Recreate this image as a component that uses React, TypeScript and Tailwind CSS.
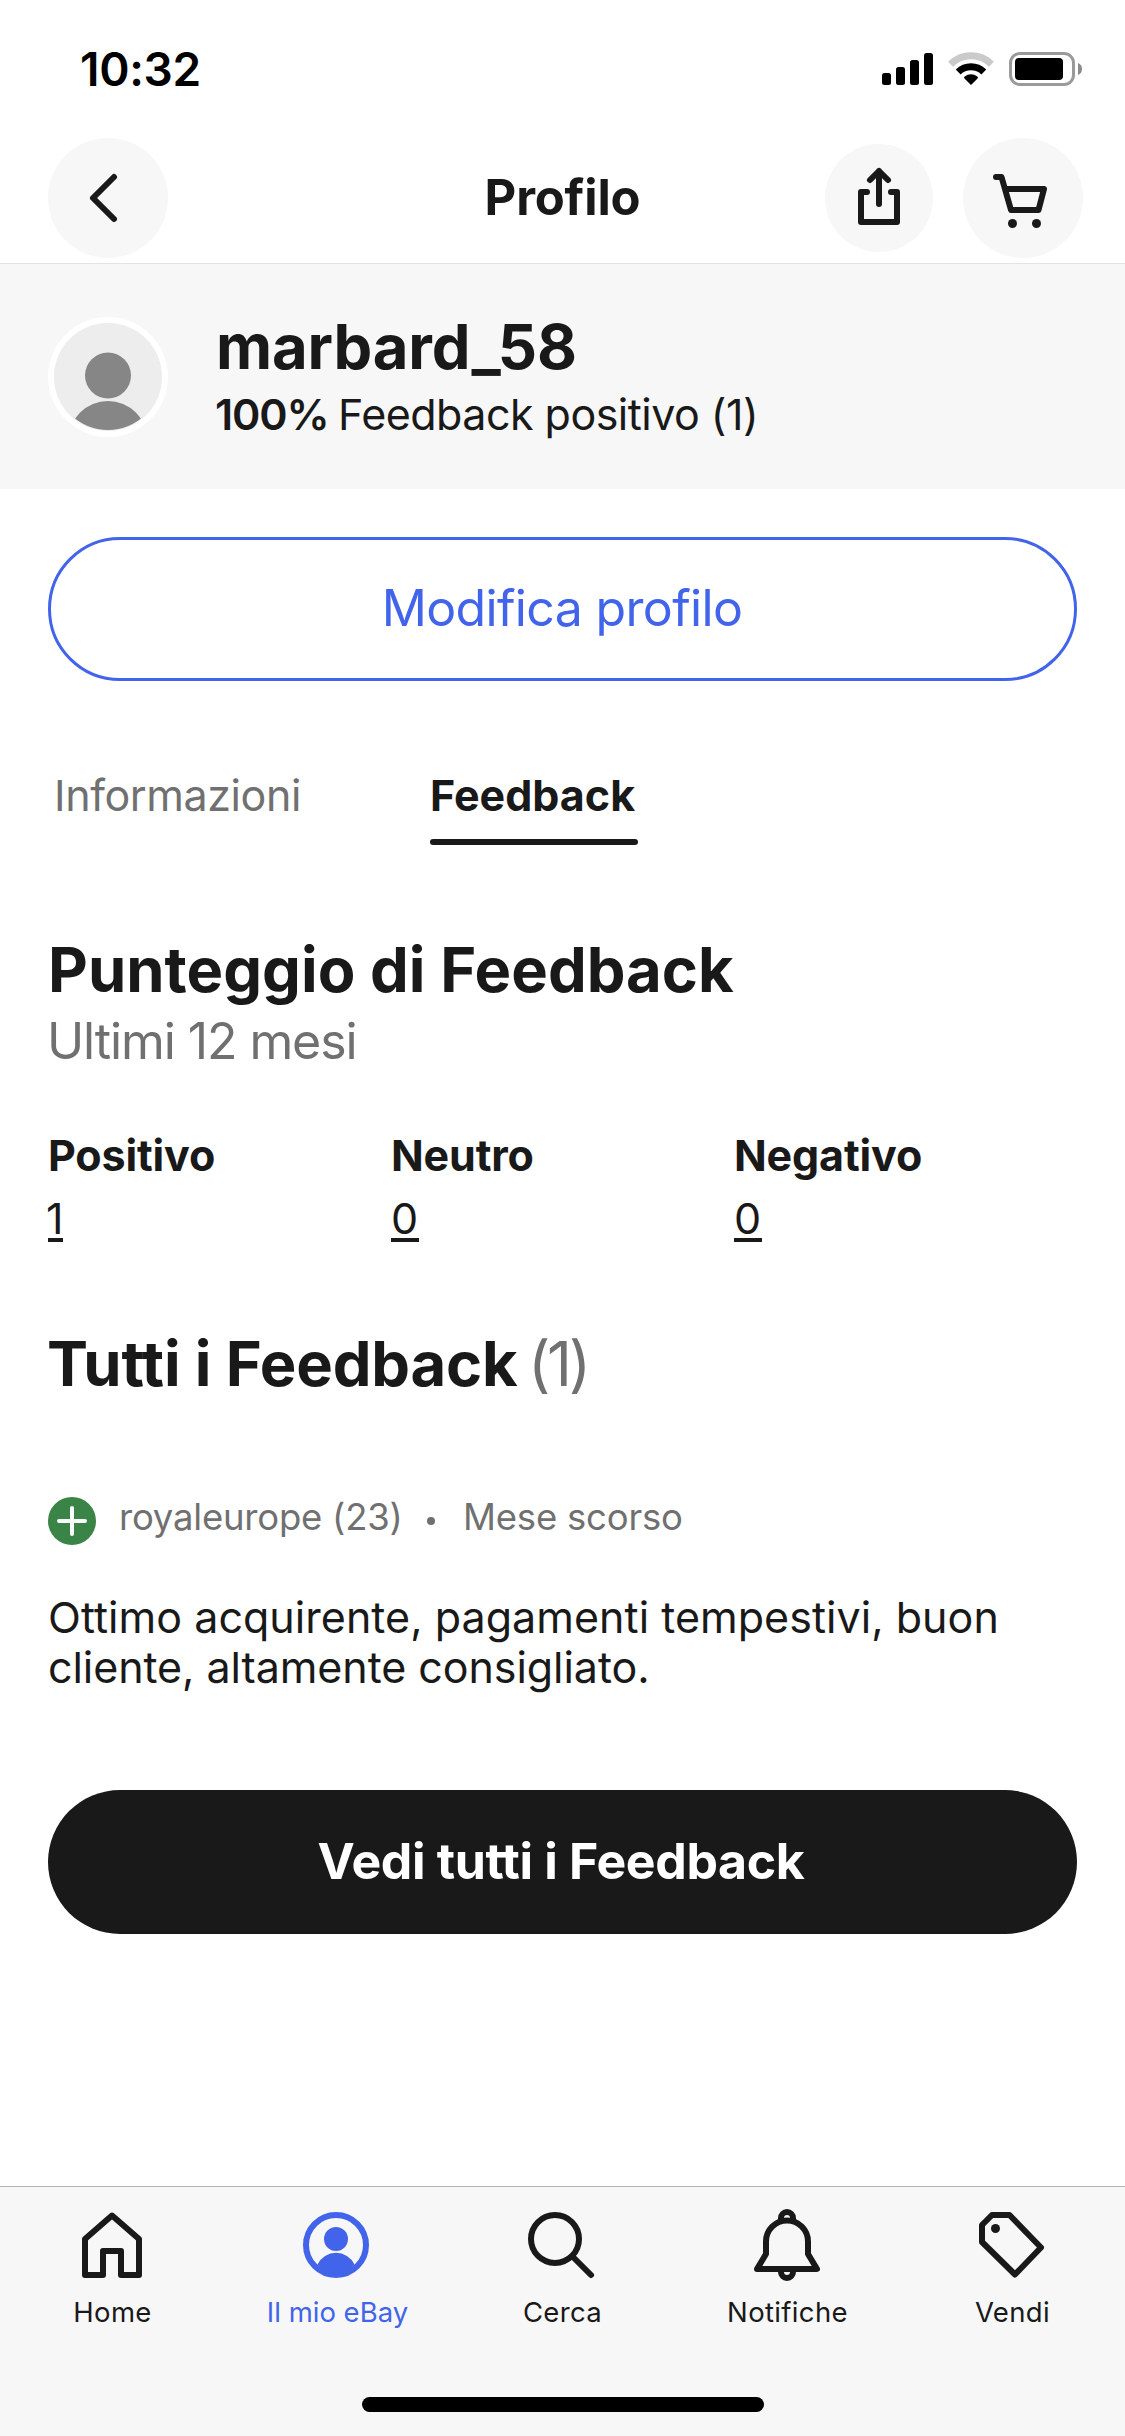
import React from 'react';

const iconStroke = {
  fill: 'none',
  stroke: 'currentColor',
  strokeWidth: 6,
  strokeLinecap: 'round' as const,
  strokeLinejoin: 'round' as const,
};

function StatusBar() {
  return (
    <div className="flex h-[132px] shrink-0 items-start justify-between pr-[41px] pl-[80px]">
      <span className="mt-[41px] text-[46px] leading-[56px] font-semibold tracking-[-0.3px] text-black">10:32</span>
      <div className="mt-[51px] flex items-start">
        <svg width="52" height="36" viewBox="0 0 52 36" className="mr-[13px]">
          <rect x="0" y="22" width="9" height="12" rx="2.500" />
          <rect x="14" y="16" width="9" height="18" rx="2.500" />
          <rect x="28" y="9" width="9" height="25" rx="2.500" />
          <rect x="42" y="2" width="9" height="32" rx="2.500" />
        </svg>
        <svg width="48" height="36" viewBox="0 0 48 36" className="mr-[14px]">
          <path d="M3.600 13.200a29 29 0 0 1 40.800 0" fill="none" stroke="#cacaca" strokeWidth="7" />
          <path d="M11.200 21a18.500 18.500 0 0 1 25.600 0" fill="none" stroke="#000" strokeWidth="7" />
          <path d="M24 34l-6.500-6.600c-.6-.6-.5-1.400.2-1.900a10.400 10.400 0 0 1 12.600 0c.7.5.8 1.300.2 1.900z" />
        </svg>
        <svg width="75" height="36" viewBox="0 0 75 36">
          <rect x="1.500" y="2.500" width="63" height="31" rx="9.500" fill="none" stroke="#9a9a9a" strokeWidth="3" />
          <rect x="6" y="7" width="48" height="22" rx="4" />
          <path d="M69 12c2.600 .9 4 3.200 4 6s-1.400 5.100-4 6z" fill="#8c8c8c" />
        </svg>
      </div>
    </div>
  );
}

function NavBar() {
  return (
    <header className="relative flex h-[132px] shrink-0 items-start justify-between border-b border-[#e3e3e3] pt-[6px] pr-[42px] pl-[48px]">
      <button className="size-[120px] rounded-full bg-[#f7f7f7]">
        <svg viewBox="0 0 120 120" className="size-[120px]" {...iconStroke}>
          <path d="M66 39L45 60l21 21" />
        </svg>
      </button>
      <h1 className="absolute inset-x-0 top-[36px] text-center text-[49px] leading-[59px] font-bold tracking-[-0.17px]">
        Profilo
      </h1>
      <div className="flex items-center gap-[30px]">
        <button className="size-[108px] rounded-full bg-[#f7f7f7]">
          <svg viewBox="0 0 108 108" className="size-[108px]" {...iconStroke}>
            <path d="M42 48h-6v30h36V48h-6" />
            <path d="M54 60V27M45 36l9-9 9 9" />
          </svg>
        </button>
        <button className="size-[120px] rounded-full bg-[#f7f7f7]">
          <svg viewBox="0 0 120 120" className="size-[120px]" {...iconStroke}>
            <path d="M33 39h5.500L48 72h27.500L81 51H42.500" />
            <circle cx="49.500" cy="85.500" r="4.500" fill="currentColor" stroke="none" />
            <circle cx="73.500" cy="85.500" r="4.500" fill="currentColor" stroke="none" />
          </svg>
        </button>
      </div>
    </header>
  );
}

function ProfileHeader() {
  return (
    <section className="flex h-[225px] shrink-0 items-start bg-[#f7f7f7] pt-[52px] pl-[48px]">
      <svg viewBox="0 0 120 120" className="mt-px size-[120px]">
        <defs>
          <clipPath id="avatar">
            <circle cx="60" cy="60" r="53" />
          </clipPath>
        </defs>
        <circle cx="60" cy="60" r="60" fill="#fff" />
        <circle cx="60" cy="60" r="54" fill="#ededed" />
        <g clipPath="url(#avatar)" fill="#868686">
          <circle cx="60" cy="58.500" r="23" />
          <circle cx="60" cy="123.500" r="39.500" />
        </g>
      </svg>
      <div className="ml-[48px]">
        <h2 className="text-[61.5px] leading-[61px] font-bold tracking-[-0.12px]">marbard_58</h2>
        <p className="ml-[-1px] flex text-[43px] leading-[75px]">
          <span className="w-[123px] font-semibold tracking-[-1.1px]">100%</span>
          <span className="whitespace-nowrap tracking-[-0.52px]">Feedback positivo (1)</span>
        </p>
      </div>
    </section>
  );
}

function Score({ label, value, width }: { label: string; value: string; width: string }) {
  return (
    <div>
      <h4 className="text-[43px] leading-[57px] font-bold tracking-[-0.15px]">{label}</h4>
      <div className={`${width} mt-[15px] border-b-4 border-[#191919] text-[43px] leading-[39px]`}>{value}</div>
    </div>
  );
}

function TabItem({ label, active, children }: { label: string; active?: boolean; children: React.ReactNode }) {
  return (
    <div className={`flex flex-col items-center pt-[21px] ${active ? 'text-[#4264eb]' : ''}`}>
      <svg viewBox="0 0 78 78" className="mr-px size-[78px]" {...iconStroke}>
        {children}
      </svg>
      <span className={`mt-[10px] text-[27.5px] leading-[34px] ${active ? '' : 'tracking-[0.35px]'}`}>{label}</span>
    </div>
  );
}

function TabBar() {
  return (
    <footer className="mt-auto flex h-[250px] shrink-0 flex-col items-center border-t border-[#b2b2b2] bg-[#f7f7f7]">
      <nav className="-mt-px grid w-full grid-cols-5">
        <TabItem label="Home">
          <path d="M39 8.500L12 32v36h18V44h18v24h18V32z" />
        </TabItem>
        <TabItem label="Il mio eBay" active>
          <circle cx="38" cy="38" r="30" />
          <circle cx="38" cy="32" r="12" fill="currentColor" stroke="none" />
          <path d="M19.500 57.500a20.500 20.500 0 0 1 37 0A27 27 0 0 1 38 68a27 27 0 0 1-18.500-10.500z" fill="currentColor" stroke="none" />
        </TabItem>
        <TabItem label="Cerca">
          <circle cx="32" cy="32" r="24" />
          <path d="M50 50l18 18" />
        </TabItem>
        <TabItem label="Notifiche">
          <path d="M9 62l9-15V34.500a21 21 0 0 1 42 0V47l9 15z" />
          <path d="M33 13v-2a6 6 0 0 1 12 0v2" />
          <path d="M33 65a6 6 0 0 0 12 0" />
        </TabItem>
        <TabItem label="Vendi">
          <path d="M19 8h17.500L68 40.500 42 67.500 9 35V18z" />
          <circle cx="22.500" cy="21.500" r="4.500" fill="currentColor" stroke="none" />
        </TabItem>
      </nav>
      <div className="mt-[68px] h-[15px] w-[402px] rounded-full bg-black" />
    </footer>
  );
}

export default function App() {
  return (
    <div className="flex h-[2436px] w-[1125px] flex-col overflow-hidden bg-white font-['Inter',sans-serif] text-[#191919]">
      <StatusBar />
      <NavBar />
      <ProfileHeader />
      <main className="px-[48px] pt-[48px]">
        <button className="block h-[144px] w-full rounded-full border-[3px] border-[#4264eb] pr-px pb-[2px] text-[50px] leading-[60px] tracking-[-0.65px] text-[#4264eb]">
          Modifica profilo
        </button>

        <div className="mt-[89px] flex text-[43px] leading-[51px]">
          <div className="ml-[6px] w-[376px] tracking-[-0.4px] text-[#707070]">Informazioni</div>
          <div className="w-[208px] font-bold">
            Feedback
            <div className="mt-[18px] h-[6px] rounded-full bg-[#191919]" />
          </div>
        </div>

        <h3 className="mt-[87px] text-[61.5px] leading-[76px] font-bold tracking-[0.04px]">Punteggio di Feedback</h3>
        <p className="ml-[-1px] text-[50px] leading-[66px] tracking-[-1.1px] text-[#707070]">Ultimi 12 mesi</p>

        <div className="mt-[53px] grid grid-cols-3">
          <Score label="Positivo" value="1" width="w-[15px] -indent-[2px]" />
          <Score label="Neutro" value="0" width="w-[28px]" />
          <Score label="Negativo" value="0" width="w-[28px]" />
        </div>

        <h3 className="mt-[84px] flex text-[61.5px] leading-[76px]">
          <span className="ml-[-1px] w-[481px] font-bold whitespace-nowrap tracking-[-0.18px]">Tutti i Feedback</span>
          <span className="tracking-[-3.4px] text-[#707070]">(1)</span>
        </h3>

        <div className="mt-[95px] flex items-start text-[36.5px] leading-[41px] text-[#707070]">
          <svg viewBox="0 0 48 48" className="size-[48px]">
            <circle cx="24" cy="24" r="24" fill="#3a8448" />
            <path d="M24 11v26M11 24h26" stroke="#fff" strokeWidth="4" strokeLinecap="round" />
          </svg>
          <span className="ml-[23px] w-[308px] tracking-[-0.22px]">royaleurope (23)</span>
          <span className="mt-[20px] size-[8px] rounded-full bg-[#707070]" />
          <span className="ml-[28px] tracking-[-0.21px]">Mese scorso</span>
        </div>

        <p className="mt-[47px] text-[43px] leading-[50px] whitespace-nowrap tracking-[0.04px]">
          Ottimo acquirente, pagamenti tempestivi, buon
          <br />
          <span className="tracking-[-0.07px]">cliente, altamente consigliato.</span>
        </p>

        <button className="mt-[98px] block h-[144px] w-full rounded-full bg-[#191919] pr-[3px] pb-[2px] text-[50px] leading-[60px] font-bold tracking-[-0.36px] text-white">
          Vedi tutti i Feedback
        </button>
      </main>
      <TabBar />
    </div>
  );
}
